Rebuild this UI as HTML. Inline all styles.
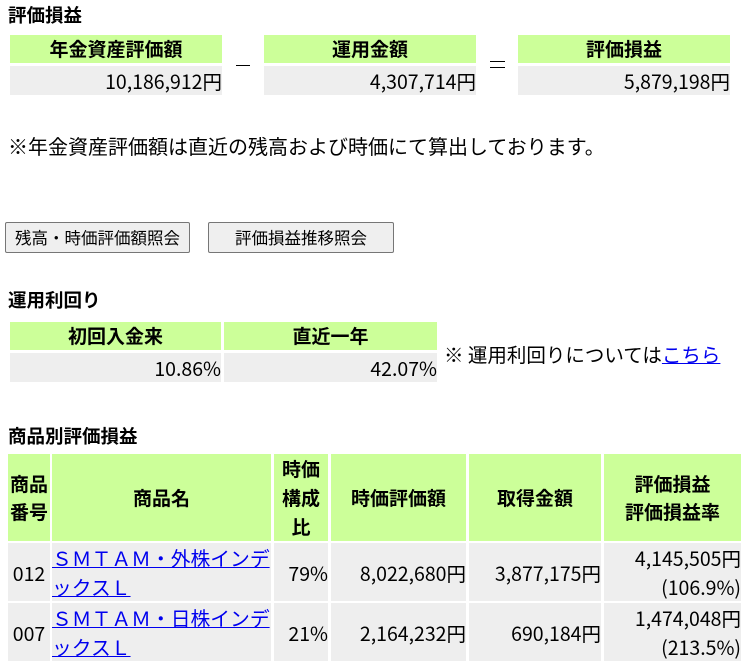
<!DOCTYPE html>
<html><head><meta charset="utf-8"><style>
body{margin:0;width:754px;height:666px;background:#fff;font-family:"Noto Sans CJK JP",sans-serif;color:#000;position:relative;overflow:hidden}
.a{position:absolute;box-sizing:border-box;white-space:nowrap}
.h{background:#ccff99;font-weight:bold;text-align:center;font-size:19px;line-height:28px}
.v{background:#eeeeee;text-align:right;font-size:19.5px;line-height:29px}
.t{font-weight:bold;font-size:18.5px;line-height:24px}
.btn{background:#efefef;border:1px solid #767676;border-radius:2px;font-size:16.5px;text-align:center;line-height:28px}
a{color:#0000ee;text-decoration:underline}
.c{display:flex;align-items:center;justify-content:center;text-align:center}
.r{justify-content:flex-end;text-align:right}
.w{white-space:normal}
</style></head><body>
<div class="a t" style="left:8px;top:3px">評価損益</div>
<div class="a h" style="left:10px;top:35px;width:212px">年金資産評価額</div>
<div class="a v" style="left:10px;top:66px;width:212px">10,186,912円</div>
<div class="a" style="left:236px;top:65px;width:14px;border-top:1.5px solid #000"></div>
<div class="a h" style="left:264px;top:35px;width:212px">運用金額</div>
<div class="a v" style="left:264px;top:66px;width:212px">4,307,714円</div>
<div class="a" style="left:490px;top:61px;width:15px;height:7px;border-top:1.5px solid #000;border-bottom:1.5px solid #000"></div>
<div class="a h" style="left:518px;top:35px;width:212px">評価損益</div>
<div class="a v" style="left:518px;top:66px;width:212px">5,879,198円</div>
<div class="a" style="left:8px;top:132px;font-size:20px;line-height:28px">※年金資産評価額は直近の残高および時価にて算出しております。</div>
<div class="a btn" style="left:5px;top:222px;width:185px;height:31px">残高・時価評価額照会</div>
<div class="a btn" style="left:208px;top:222px;width:186px;height:31px">評価損益推移照会</div>
<div class="a t" style="left:8px;top:288px">運用利回り</div>
<div class="a h" style="left:10px;top:322px;width:211px">初回入金来</div>
<div class="a v" style="left:10px;top:353px;width:211px">10.86%</div>
<div class="a h" style="left:224px;top:322px;width:213px">直近一年</div>
<div class="a v" style="left:224px;top:353px;width:213px">42.07%</div>
<div class="a" style="left:444px;top:340px;font-size:19.5px;line-height:28px">※ 運用利回りについては<a>こちら</a></div>
<div class="a t" style="left:8px;top:424px">商品別評価損益</div>
<div class="a h c" style="left:8px;top:454px;width:42px;height:87px;line-height:28px">商品<br>番号</div>
<div class="a h c" style="left:52px;top:454px;width:219px;height:87px">商品名</div>
<div class="a h c" style="left:274px;top:454px;width:54px;height:87px;line-height:29px">時価<br>構成<br>比</div>
<div class="a h c" style="left:331px;top:454px;width:135px;height:87px">時価評価額</div>
<div class="a h c" style="left:469px;top:454px;width:132px;height:87px">取得金額</div>
<div class="a h c" style="left:604px;top:454px;width:137px;height:87px;line-height:28px">評価損益<br>評価損益率</div>
<div class="a v c" style="left:8px;top:543px;width:42px;height:58px">012</div>
<div class="a v w" style="left:52px;top:543px;width:219px;height:58px;text-align:left;line-height:29px;font-size:19.8px"><a>ＳＭＴＡＭ・外株インデックスＬ</a></div>
<div class="a v c r" style="left:274px;top:543px;width:54px;height:58px">79%</div>
<div class="a v c r" style="left:331px;top:543px;width:135px;height:58px">8,022,680円</div>
<div class="a v c r" style="left:469px;top:543px;width:132px;height:58px">3,877,175円</div>
<div class="a v" style="left:604px;top:543px;width:137px;height:58px">4,145,505円<br>(106.9%)</div>
<div class="a v c" style="left:8px;top:603px;width:42px;height:58px">007</div>
<div class="a v w" style="left:52px;top:603px;width:219px;height:58px;text-align:left;line-height:29px;font-size:19.8px"><a>ＳＭＴＡＭ・日株インデックスＬ</a></div>
<div class="a v c r" style="left:274px;top:603px;width:54px;height:58px">21%</div>
<div class="a v c r" style="left:331px;top:603px;width:135px;height:58px">2,164,232円</div>
<div class="a v c r" style="left:469px;top:603px;width:132px;height:58px">690,184円</div>
<div class="a v" style="left:604px;top:603px;width:137px;height:58px">1,474,048円<br>(213.5%)</div>
</body></html>
